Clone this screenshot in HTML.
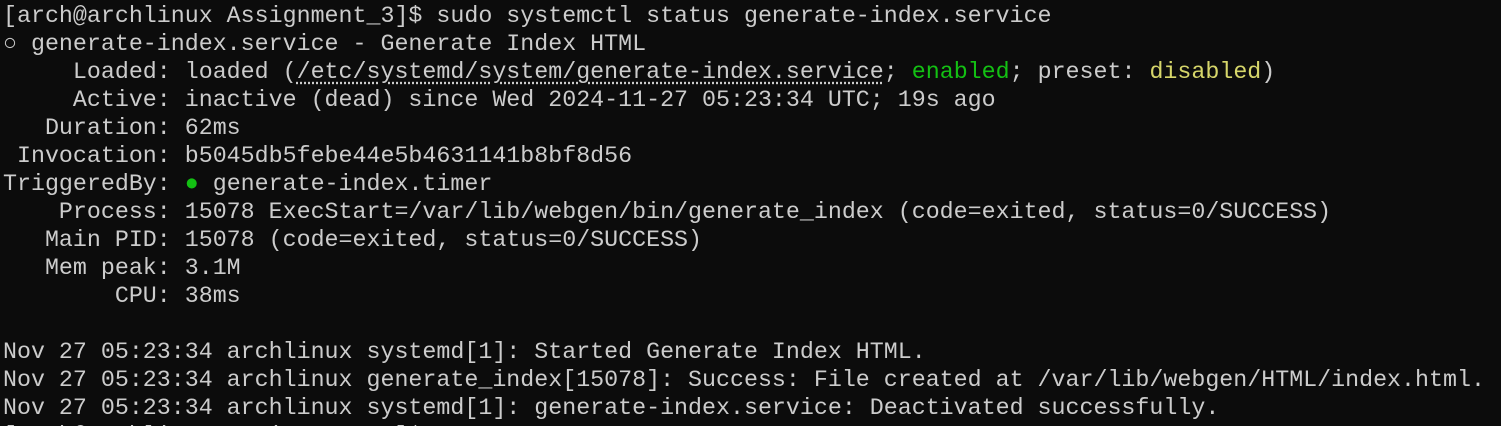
<!DOCTYPE html>
<html><head><meta charset="utf-8"><style>
html,body{margin:0;padding:0;background:#0c0c0c;width:1501px;height:426px;overflow:hidden}
pre{margin:0;padding:2px 0 0 3px;font-family:"Liberation Mono","DejaVu Sans Mono",monospace;font-size:23.3px;line-height:28px;color:#cccccc;white-space:pre}
.g{color:#13c013}.y{color:#d6d66a}.u{text-decoration:underline dotted;text-underline-offset:4px}
</style></head><body><pre>[arch@archlinux Assignment_3]$ sudo systemctl status generate-index.service
○ generate-index.service - Generate Index HTML
     Loaded: loaded (<span class="u">/etc/systemd/system/generate-index.service</span>; <span class="g">enabled</span>; preset: <span class="y">disabled</span>)
     Active: inactive (dead) since Wed 2024-11-27 05:23:34 UTC; 19s ago
   Duration: 62ms
 Invocation: b5045db5febe44e5b4631141b8bf8d56
TriggeredBy: <span class="g">●</span> generate-index.timer
    Process: 15078 ExecStart=/var/lib/webgen/bin/generate_index (code=exited, status=0/SUCCESS)
   Main PID: 15078 (code=exited, status=0/SUCCESS)
   Mem peak: 3.1M
        CPU: 38ms

Nov 27 05:23:34 archlinux systemd[1]: Started Generate Index HTML.
Nov 27 05:23:34 archlinux generate_index[15078]: Success: File created at /var/lib/webgen/HTML/index.html.
Nov 27 05:23:34 archlinux systemd[1]: generate-index.service: Deactivated successfully.
[arch@archlinux Assignment_3]$ </pre></body></html>
